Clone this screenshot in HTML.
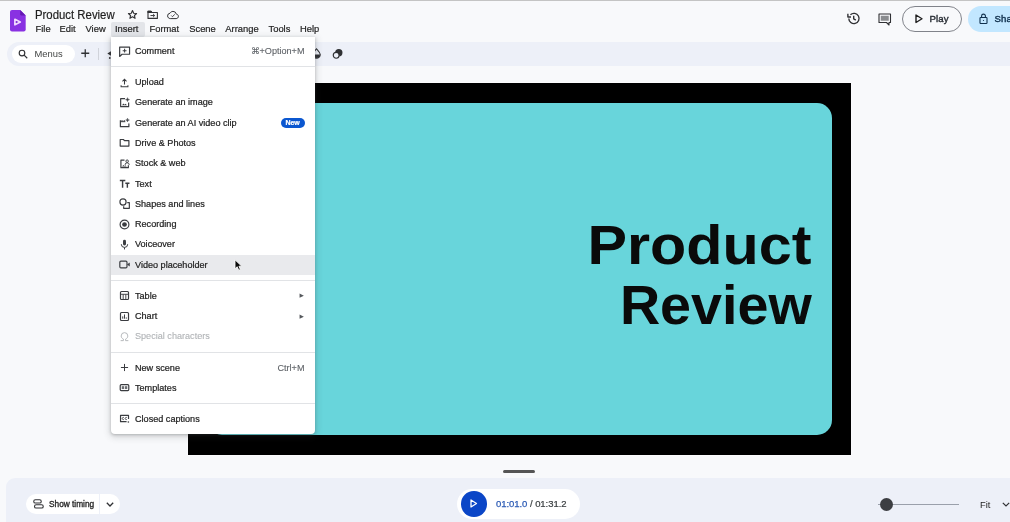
<!DOCTYPE html>
<html lang="en">
<head>
<meta charset="utf-8">
<title>Product Review</title>
<style>
*{box-sizing:border-box;margin:0;padding:0}
html,body{width:1010px;height:522px;overflow:hidden}
body{background:#f8f9fb;font-family:"Liberation Sans",Arial,sans-serif;color:#1f1f1f;position:relative}
.abs{position:absolute}
svg{position:absolute;overflow:visible}
.topline{left:0;top:0;width:1010px;height:1.3px;background:linear-gradient(#b9b9b9,#cfcfcf)}
/* header */
.title{left:34.6px;top:6.5px;font-size:12.3px;line-height:16px;color:#1f1f1f;white-space:nowrap;transform:scaleX(.925);transform-origin:0 50%;-webkit-text-stroke:.2px #1f1f1f}
.mb{top:22px;height:14.5px;line-height:14.5px;font-size:9.4px;-webkit-text-stroke:.2px #1f1f1f;color:#1f1f1f;white-space:nowrap;border-radius:2px}
.mb.on{background:#e3e5e9}
/* toolbar */
.toolbar{left:7.3px;top:41.7px;width:1010px;height:24.7px;background:#edf0f8;border-radius:12.4px 0 0 12.4px}
.menus{left:11.5px;top:45px;width:63px;height:17.5px;border-radius:9px;background:#fff}
.menus span{position:absolute;left:23px;top:0;line-height:17.5px;font-size:9.4px;color:#444746}
/* canvas */
.black{left:188px;top:82.5px;width:662.8px;height:372.3px;background:#000;box-shadow:0 0 0 .6px rgba(255,255,255,.7)}
.teal{left:207px;top:103px;width:624.8px;height:332px;background:#68d5db;border-radius:15px}
.big{font-size:55.7px;font-weight:bold;line-height:60px;color:#0a0a0a;white-space:nowrap;transform-origin:100% 50%}
/* bottom */
.handle{left:502.7px;top:470px;width:32px;height:2.5px;border-radius:2px;background:#555}
.bottom{left:6px;top:478px;width:1010px;height:60px;background:#edf0f8;border-radius:9px 0 0 0}
.pill{background:#fff;border-radius:12px}
/* menu */
.menu{left:110.5px;top:37px;width:204px;height:396.5px;background:#fff;border-radius:0 0 4px 4px;box-shadow:0 1px 3px rgba(60,64,67,.30),0 2px 6px 2px rgba(60,64,67,.15)}
.mi{left:0;width:204px;height:20.3px;font-size:9.1px;-webkit-text-stroke:.22px;line-height:20.3px;color:#1f1f1f;white-space:nowrap}
.mi .t{position:absolute;left:24.5px;top:0}
.mi .k{position:absolute;right:10px;top:0;color:#5f6368;-webkit-text-stroke:.1px #5f6368}
.mi.dis{color:#b0b3b6;-webkit-text-stroke:.1px #b0b3b6}
.mi.hov{background:#e9eaed}
.ic{left:8.4px;top:4.6px;width:11px;height:11px}
.arr{left:188.2px;top:7.600px;width:5.400px;height:5.400px}
.sep{left:0;width:204px;height:1px;background:#e1e3e6}
.new{position:absolute;right:10px;top:5.2px;height:10px;line-height:10px;padding:0 4.7px;border-radius:5px;background:#0b57d0;color:#fff;font-size:7px;font-weight:bold}
</style>
</head>
<body>
<div id="root" style="position:absolute;left:0;top:0;width:1010px;height:522px;will-change:transform">
<div class="abs topline"></div>

<!-- logo -->
<svg style="left:9.8px;top:9.8px" width="15.700" height="21.500" viewBox="0 0 15.700 21.500">
  <path d="M2 0H10.200L15.700 5.500V19.500Q15.700 21.500 13.700 21.500H2Q0 21.500 0 19.500V2Q0 0 2 0Z" fill="#8931e2"/>
  <path d="M10.200 0L15.700 5.500H11.400Q10.200 5.500 10.200 4.300Z" fill="#6518b4"/>
  <path d="M4.900 9.300L10.300 12L4.900 14.800Z" fill="#7a28cf" stroke="#f1d9ff" stroke-width="1.700" stroke-linejoin="round"/>
</svg>
<div class="abs title">Product Review</div>

<!-- title icons -->
<svg style="left:126.600px;top:9.200px" width="11" height="11" viewBox="0 0 24 24" fill="none" stroke="#303134" stroke-width="2.500" stroke-linejoin="round"><path d="M12 3.400l2.600 5.800 6.300.700-4.700 4.200 1.400 6.200L12 17l-5.600 3.300 1.400-6.200-4.700-4.200 6.300-.700z"/></svg>
<svg style="left:146.800px;top:10.300px" width="11.400" height="9.400" viewBox="0 0 23 19" fill="none" stroke="#303134" stroke-width="2.200"><path d="M2 2.500h6l2 2.500h11v12H2z" stroke-linejoin="round"/><path d="M2 2.500h6l2 2.500H2z" fill="#303134" stroke-linejoin="round"/><path d="M7 11.200h8M12.300 8l3.200 3.200-3.200 3.200" stroke-width="1.900"/></svg>
<svg style="left:167px;top:8.800px" width="12" height="12" viewBox="0 0 24 24" fill="none" stroke="#303134" stroke-width="2.200"><path d="M19.350 10.040A7.490 7.490 0 0 0 12 4C9.110 4 6.600 5.640 5.350 8.040A5.994 5.994 0 0 0 0 14c0 3.310 2.690 6 6 6h13c2.760 0 5-2.240 5-5 0-2.640-2.050-4.780-4.650-4.960z" transform="translate(1.200 1.200) scale(.9)" stroke-linejoin="round"/><path d="M8.500 13l2.400 2.400 4.600-4.600" stroke-width="1.800"/></svg>

<!-- menubar -->
<div class="abs mb" style="left:35.5px">File</div>
<div class="abs mb" style="left:59.5px">Edit</div>
<div class="abs mb" style="left:85.5px">View</div>
<div class="abs mb on" style="left:110.5px;width:34px;padding-left:4.5px">Insert</div>
<div class="abs mb" style="left:149.5px">Format</div>
<div class="abs mb" style="left:189.2px">Scene</div>
<div class="abs mb" style="left:225.3px">Arrange</div>
<div class="abs mb" style="left:268.5px">Tools</div>
<div class="abs mb" style="left:300px">Help</div>

<!-- right header -->
<svg style="left:845.500px;top:11px" width="15" height="15" viewBox="0 0 24 24" fill="none" stroke="#303134" stroke-width="2.2"><path d="M4.5 12a8.2 8.2 0 1 0 2.6-6"/><path d="M3 4.5v5h5" stroke-linejoin="round"/><path d="M12.3 7.5v5l3.4 2.2"/></svg>
<svg style="left:877.5px;top:12.5px" width="14" height="13" viewBox="0 0 28 26"><path d="M2 2h23v17h-3v5l-5-5H2z" fill="none" stroke="#303134" stroke-width="2.2" stroke-linejoin="round"/><rect x="5.5" y="5.5" width="16" height="10" fill="#8a8c8f"/></svg>
<div class="abs" style="left:902px;top:6px;width:59.5px;height:25.5px;border:1px solid #80838a;border-radius:13px;background:#f8f9fb"></div>
<svg style="left:914.5px;top:14px" width="8" height="9.5" viewBox="0 0 8 9.5"><path d="M1 1L7 4.75L1 8.5Z" fill="none" stroke="#1f1f1f" stroke-width="1.4" stroke-linejoin="round"/></svg>
<div class="abs" style="left:929.5px;top:12px;font-size:9.6px;line-height:13px;-webkit-text-stroke:.4px #2a2f36;color:#2a2f36;letter-spacing:.15px">Play</div>
<div class="abs" style="left:967.500px;top:6px;width:60px;height:25.500px;border-radius:13px;background:#c2e7ff"></div>
<svg style="left:979px;top:12.5px" width="9" height="11.5" viewBox="0 0 18 23" fill="none" stroke="#10304d" stroke-width="2.2"><rect x="2" y="9" width="14" height="12" rx="1.5"/><path d="M5.2 9V6a3.8 3.8 0 0 1 7.6 0v3"/><circle cx="9" cy="15" r="1.2" fill="#10304d" stroke="none"/></svg>
<div class="abs" style="left:994.5px;top:12px;font-size:9.6px;line-height:13px;-webkit-text-stroke:.4px #10304d;color:#10304d;white-space:nowrap;letter-spacing:.15px">Share</div>

<!-- toolbar -->
<div class="abs toolbar"></div>
<div class="abs menus"><span>Menus</span></div>
<svg style="left:18px;top:48.5px" width="10" height="10" viewBox="0 0 20 20" fill="none" stroke="#303134" stroke-width="2.3"><circle cx="8" cy="8" r="5.6"/><path d="M12.3 12.3L18.5 18.5"/></svg>
<svg style="left:81.300px;top:49.200px" width="8.500" height="8.500" viewBox="0 0 10 10" stroke="#303134" stroke-width="1.5"><path d="M5 0.3V9.7M0.3 5H9.7"/></svg>
<div class="abs" style="left:98px;top:47.5px;width:1px;height:12.300px;background:#d0d3da"></div>
<svg style="left:106.500px;top:50.500px" width="5" height="9" viewBox="0 0 5 9"><path d="M0.300 2.500L4 0.200V4.800Z" fill="#303134"/><circle cx="2.800" cy="7" r="0.900" fill="#303134"/></svg>
<!-- toolbar right-of-menu icons -->
<svg style="left:310.5px;top:48.3px" width="11" height="10.500" viewBox="0 0 20 21"><path d="M10 1.5C13 5 17.5 9 17.5 13a7.5 7.5 0 0 1-15 0C2.500 9 7 5 10 1.500Z" fill="none" stroke="#303134" stroke-width="2.2"/><path d="M3 13h14a7 7 0 0 1-14 0z" fill="#303134"/></svg>
<svg style="left:332.300px;top:48.200px" width="11.500" height="11.500" viewBox="0 0 22 22"><circle cx="13" cy="9" r="7" fill="#303134"/><circle cx="8" cy="14" r="5.6" fill="#edf0f8" stroke="#303134" stroke-width="2.2"/></svg>

<!-- canvas -->
<div class="abs black"></div>
<div class="abs teal"></div>
<div class="abs big" id="bigA" style="right:198.3px;top:214.9px;transform:scaleX(1.064)">Product</div>
<div class="abs big" id="bigB" style="right:198.2px;top:274.5px;transform:scaleX(1.0)">Review</div>

<!-- bottom -->
<div class="abs handle"></div>
<div class="abs bottom"></div>
<div class="abs pill" style="left:26.200px;top:494px;width:93.500px;height:20px;border-radius:10px"></div>
<div class="abs" style="left:99px;top:494px;width:1px;height:20px;background:#edf0f8"></div>
<svg style="left:32.500px;top:499px" width="11" height="10" viewBox="0 0 22 20" fill="none" stroke="#303134" stroke-width="2.2"><rect x="1.500" y="1.500" width="15" height="6.500" rx="3.250"/><rect x="3" y="11.500" width="17.500" height="6.500" rx="3.250"/></svg>
<div class="abs" style="left:49px;top:498px;font-size:8.3px;line-height:12px;color:#1f1f1f;white-space:nowrap;-webkit-text-stroke:.3px #1f1f1f">Show timing</div>
<svg style="left:105.5px;top:501.5px" width="8" height="5" viewBox="0 0 8 5" fill="none" stroke="#303134" stroke-width="1.3"><path d="M0.8 0.8L4 4L7.2 0.8"/></svg>

<div class="abs pill" style="left:457px;top:489px;width:123px;height:30.400px;border-radius:15.200px"></div>
<div class="abs" style="left:461px;top:491px;width:25.5px;height:25.5px;border-radius:50%;background:#0b46c7"></div>
<svg style="left:470.300px;top:499.300px" width="7.500" height="9" viewBox="0 0 7.500 9"><path d="M1 1L6.500 4.500L1 8Z" fill="none" stroke="#fff" stroke-width="1.3" stroke-linejoin="round"/></svg>
<div class="abs" style="left:496px;top:496.800px;font-size:9.5px;line-height:13px;white-space:nowrap;color:#3c4043;-webkit-text-stroke:.22px #3c4043;letter-spacing:-.05px"><span style="color:#2c5bb5;-webkit-text-stroke:.25px #2c5bb5">01:01.0</span> / 01:31.2</div>

<div class="abs" style="left:878px;top:504px;width:81px;height:1px;background:#9aa0ab"></div>
<div class="abs" style="left:880px;top:498px;width:13px;height:13px;border-radius:50%;background:#3c3e42"></div>
<div class="abs" style="left:980px;top:498px;font-size:9.4px;line-height:13px;color:#1f1f1f">Fit</div>
<svg style="left:1002px;top:502px" width="8" height="5" viewBox="0 0 8 5" fill="none" stroke="#303134" stroke-width="1.2"><path d="M0.8 0.8L4 4L7.2 0.8"/></svg>

<!-- dropdown menu -->
<div class="abs menu" id="menu">
  <div class="abs mi" style="top:4px"><svg class="ic" viewBox="0 0 20 20" fill="none" stroke="#3a3c40" stroke-width="2.15" ><path d="M1.200 2h18v13H5.500L1.200 19z" stroke-linejoin="round"/><path d="M10.200 5v7M6.700 8.500h7" stroke-width="1.900"/></svg><span class="t">Comment</span><span class="k">⌘+Option+M</span></div>
  <div class="abs sep" style="top:29.2px"></div>
  <div class="abs mi" style="top:35px"><svg class="ic" viewBox="0 0 20 20" fill="none" stroke="#3a3c40" stroke-width="2.15" ><path d="M10 13.500V4.500M6.300 7.800L10 4.100l3.700 3.700M3.800 15v2.800h12.400V15" stroke-width="1.900"/></svg><span class="t">Upload</span></div>
  <div class="abs mi" style="top:55.3px"><svg class="ic" viewBox="0 0 20 20" fill="none" stroke="#3a3c40" stroke-width="2.15" ><path d="M11 3H3v14.500h14.500V10" stroke-linejoin="round"/><path d="M5.500 15l2.500-3 2 2 1.800-1.800L14.500 15z" fill="#3a3c40" stroke="none"/><path d="M15.5 1.1999999999999997Q15.5 4.8 19.1 4.8Q15.5 4.8 15.5 8.4Q15.5 4.8 11.9 4.8Q15.5 4.8 15.5 1.1999999999999997Z" fill="#3a3c40" stroke="#3a3c40" stroke-width="0.8" stroke-linejoin="round"/></svg><span class="t">Generate an image</span></div>
  <div class="abs mi" style="top:75.6px"><svg class="ic" viewBox="0 0 20 20" fill="none" stroke="#3a3c40" stroke-width="2.15" ><path d="M2.500 6v11.500h15.500V12" stroke-linejoin="round"/><path d="M2.500 8.500h9M5.500 5.500v3M9.500 5.500v3" stroke-width="1.8"/><path d="M15.5 2.1Q15.5 5.5 18.9 5.5Q15.5 5.5 15.5 8.9Q15.5 5.5 12.1 5.5Q15.5 5.5 15.5 2.1Z" fill="#3a3c40" stroke="#3a3c40" stroke-width="0.8" stroke-linejoin="round"/></svg><span class="t">Generate an AI video clip</span><span class="new">New</span></div>
  <div class="abs mi" style="top:95.9px"><svg class="ic" viewBox="0 0 20 20" fill="none" stroke="#3a3c40" stroke-width="2.15" ><path d="M2.200 4.500h5.800l2 2h8v10H2.200z" stroke-linejoin="round"/></svg><span class="t">Drive &amp; Photos</span></div>
  <div class="abs mi" style="top:116.2px"><svg class="ic" viewBox="0 0 20 20" fill="none" stroke="#3a3c40" stroke-width="2.15" ><path d="M10 4H3.500v13.500H17V13" stroke-linejoin="round"/><circle cx="14.800" cy="5.800" r="2.300" stroke-width="1.700"/><path d="M11 12.500a3.800 3.800 0 0 1 7.600 0" stroke-width="1.700"/><path d="M5.500 15.500l2.500-3 2 2.200 1.500-1.500 2.500 2.300z" fill="#3a3c40" stroke="none"/></svg><span class="t">Stock &amp; web</span></div>
  <div class="abs mi" style="top:136.5px"><svg class="ic" viewBox="0 0 20 20" fill="none" stroke="#3a3c40" stroke-width="2.15" ><path d="M1.500 4.500h10M6.500 4.500v13M11.500 9.500h7.500M15.200 9.500v8" stroke-width="2.600"/></svg><span class="t">Text</span></div>
  <div class="abs mi" style="top:156.8px"><svg class="ic" viewBox="0 0 20 20" fill="none" stroke="#3a3c40" stroke-width="2.15" ><circle cx="7.300" cy="7.300" r="5.600"/><path d="M15 8.500h3.800v10.300H8.500v-3.600" stroke-linejoin="round"/></svg><span class="t">Shapes and lines</span></div>
  <div class="abs mi" style="top:177.1px"><svg class="ic" viewBox="0 0 20 20" fill="none" stroke="#3a3c40" stroke-width="2.15" ><circle cx="10" cy="10" r="8"/><circle cx="10" cy="10" r="4.300" fill="#3a3c40" stroke="none"/></svg><span class="t">Recording</span></div>
  <div class="abs mi" style="top:197.4px"><svg class="ic" viewBox="0 0 20 20" fill="none" stroke="#3a3c40" stroke-width="2.15" ><rect x="7.300" y="1.500" width="5.400" height="10.500" rx="2.700" fill="#3a3c40" stroke="none"/><path d="M4.200 9.500a5.800 5.800 0 0 0 11.600 0M10 15.500v3.500" stroke-width="1.800"/></svg><span class="t">Voiceover</span></div>
  <div class="abs mi hov" style="top:217.7px"><svg class="ic" viewBox="0 0 20 20" fill="none" stroke="#3a3c40" stroke-width="2.15" ><rect x="1.500" y="3.800" width="13" height="12.400" rx="2"/><path d="M14.500 10l5-3.800v7.600z" fill="#3a3c40" stroke="none"/></svg><span class="t">Video placeholder</span></div>
  <div class="abs sep" style="top:243.3px"></div>
  <div class="abs mi" style="top:248.8px"><svg class="ic" viewBox="0 0 20 20" fill="none" stroke="#3a3c40" stroke-width="2.15" ><rect x="2.700" y="2.700" width="14.600" height="14.600" rx="1.800"/><path d="M2.700 7.800h14.600M7.600 7.800v9.500M12.400 7.800v9.500" stroke-width="1.700"/></svg><span class="t">Table</span><svg class="arr" viewBox="0 0 10 10"><path d="M1 1L9 5L1 9Z" fill="#55585c"/></svg></div>
  <div class="abs mi" style="top:269.1px"><svg class="ic" viewBox="0 0 20 20" fill="none" stroke="#3a3c40" stroke-width="2.15" ><rect x="2.700" y="2.700" width="14.600" height="14.600" rx="1.800"/><path d="M6.800 14V9.800M10 14V6.300M13.200 14v-2.300" stroke-width="1.800"/></svg><span class="t">Chart</span><svg class="arr" viewBox="0 0 10 10"><path d="M1 1L9 5L1 9Z" fill="#55585c"/></svg></div>
  <div class="abs mi dis" style="top:289.4px"><svg class="ic" viewBox="0 0 20 20" fill="none" stroke="#3a3c40" stroke-width="2.15" ><path d="M3 17.500h5v-2.800C5.300 13.500 4 11.500 4 9a6 6 0 0 1 12 0c0 2.500-1.300 4.500-4 5.700v2.800h5" stroke="#b5b8bb" stroke-width="1.800"/></svg><span class="t">Special characters</span></div>
  <div class="abs sep" style="top:315px"></div>
  <div class="abs mi" style="top:320.700px"><svg class="ic" viewBox="0 0 20 20" fill="none" stroke="#3a3c40" stroke-width="2.15" ><path d="M10 3.500v13M3.500 10h13" stroke-width="1.800"/></svg><span class="t">New scene</span><span class="k">Ctrl+M</span></div>
  <div class="abs mi" style="top:340.6px"><svg class="ic" viewBox="0 0 20 20" fill="none" stroke="#3a3c40" stroke-width="2.15" ><rect x="2.200" y="4.800" width="15.600" height="10.800" rx="1.800"/><rect x="5" y="7.600" width="4.300" height="5.200" fill="#6b6e72" stroke="none"/><rect x="10.700" y="7.600" width="4.300" height="5.200" fill="#6b6e72" stroke="none"/></svg><span class="t">Templates</span></div>
  <div class="abs sep" style="top:366px"></div>
  <div class="abs mi" style="top:371.8px"><svg class="ic" viewBox="0 0 20 20" fill="none" stroke="#3a3c40" stroke-width="2.15" ><path d="M17.300 11V4.300H2.800V15.700h11" stroke-linejoin="round"/><path d="M9 8.400a2 2 0 1 0 0 3.200M14.300 8.400a2 2 0 1 0 0 3.200" stroke-width="1.500"/><circle cx="17" cy="16.300" r="1.500" fill="#3a3c40" stroke="none"/></svg><span class="t">Closed captions</span></div>
</div>
<!-- cursor -->
<svg style="left:234.100px;top:258.700px" width="8.800" height="12.200" viewBox="0 0 8 11.500"><path d="M0.800 0.800V9.200L2.900 7.300L4.300 10.600L5.900 9.900L4.500 6.800H7.200Z" fill="#0c0c0c" stroke="#fff" stroke-width="0.800" stroke-linejoin="round"/></svg>
</div>
</body>
</html>
